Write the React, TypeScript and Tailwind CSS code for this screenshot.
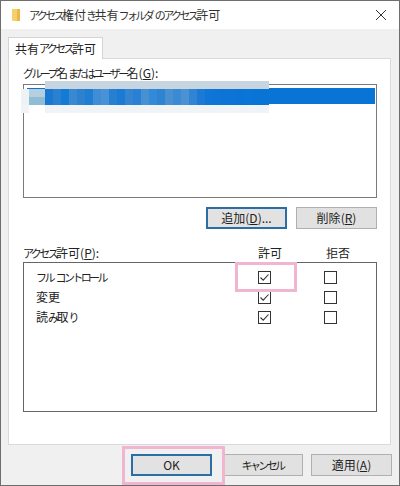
import React from 'react';

const font = { fontFamily: '"Noto Sans CJK JP", "Noto Sans", sans-serif' };

function T({ s }: { s: string }) {
  const parts = s.split(/([\u3040-\u30ff]+)/);
  return (
    <>
      {parts.map((p, i) =>
        i % 2 === 1 ? (
          <span key={i} className="text-[11px] tracking-[-2.6px]">{p}</span>
        ) : (
          <span key={i}>{p}</span>
        )
      )}
    </>
  );
}

function Check({ on }: { on?: boolean }) {
  return (
    <span className="flex h-[13px] w-[13px] items-center justify-center border border-[#333333] bg-white">
      {on && (
        <svg width="11" height="11" viewBox="0 0 11 11" fill="none">
          <path d="M1.5 5.5 L4.2 8.2 L9.5 2.5" stroke="#333333" strokeWidth="1.1" />
        </svg>
      )}
    </span>
  );
}

function Btn({ children, focus, cls }: { children: React.ReactNode; focus?: boolean; cls: string }) {
  return (
    <div
      className={`flex h-[22px] items-center justify-center whitespace-pre text-[12px] text-[#222222] ${cls} ${
        focus ? 'border-2 border-[#2a6ea6] bg-[#e2e2e2]' : 'border border-[#b0b0b0] bg-[#e1e1e1]'
      }`}
    >
      {children}
    </div>
  );
}

const blues = ['#1a78d2','#2b80d0','#127bd6','#3a88d0','#2d82d0','#1f7dd2','#3f8dd4','#4a92d6','#277fd2','#1a7ad4','#3484d0','#2a80d4','#4790d2','#338ad6','#2c84d2','#4a90d0','#3a8ad4','#4c92d2','#2f84d4','#1c7ad6','#0f76d6','#0e75d6','#0c74d6','#0b74d6','#0a74d6','#0a75d8','#0a74d6','#0a74d6'];

function Row({ label }: { label: string }) {
  return (
    <div className="flex h-5 items-center">
      <span className="w-[234px] pl-[12px] text-[12px] text-[#222222]"><T s={label} /></span>
      <Check on />
      <span className="w-[53px]" />
      <Check />
    </div>
  );
}

export default function App() {
  return (
    <div className="relative flex h-[486px] w-[400px] flex-col overflow-hidden border border-[#6e6e6e] bg-[#f0f0f0]" style={font}>
      <div className="flex h-[28px] shrink-0 items-center bg-white pl-[11px] pr-[11px]">
        <svg width="9" height="12" viewBox="0 0 9 12" className="mr-[8px]">
          <path d="M0 0 H8 V12 H1 L0 11 Z" fill="#f5cf6a" />
          <path d="M5 0 H8 V12 H5 Z" fill="#e8b84a" />
        </svg>
        <span className="flex-1 whitespace-pre text-[12px] text-[#333333]"><T s="アクセス権付き共有フォルダ のアクセス許可" /></span>
        <svg width="12" height="12" viewBox="0 0 12 12" className="mr-[1px]">
          <path d="M1 1 L11 11 M11 1 L1 11" stroke="#333333" strokeWidth="1" />
        </svg>
      </div>

      <div className="flex flex-1 flex-col px-[7px] pt-[8px]">
        <div className="relative z-10 -mb-px flex h-[22px] w-[95px] items-center justify-center whitespace-nowrap border border-b-0 border-[#d4d4d4] bg-white text-[12px] text-[#222222]">
          <T s="共有アクセス許可" />
        </div>
        <div className="h-[387px] w-[383px] border border-[#d9d9d9] bg-white px-[14px] pt-[6px]">
          <div className="h-[16px] whitespace-nowrap text-[12px] leading-[16px] text-[#222222]">
            <T s="グループ名またはユーザー名" />(<span className="underline">G</span>):
          </div>
          <div className="mt-[3px] h-[114px] w-[354px] border border-[#7a7a7a] bg-white p-[3px] pr-px">
            <div className="h-4 bg-[#0a74d6]" />
          </div>
          <div className="mt-[9px] flex w-[354px] justify-end gap-[9px]">
            <Btn focus cls="w-[81px]"><T s="追加" />(<span className="underline">D</span>)...</Btn>
            <Btn cls="w-[81px]"><T s="削除" />(<span className="underline">R</span>)</Btn>
          </div>
          <div className="mt-[15px] flex h-[18px] w-[354px] items-center whitespace-nowrap text-[12px] text-[#222222]">
            <span className="w-[235px]"><T s="アクセス許可" />(<span className="underline">P</span>):</span>
            <span className="w-[68px]">許可</span>
            <span>拒否</span>
          </div>
          <div className="h-[150px] w-[354px] border border-[#666666] bg-white pt-[4px]">
            <Row label="フル コントロール" />
            <Row label="変更" />
            <Row label="読み取り" />
          </div>
        </div>
        <div className="mt-[9px] flex justify-end gap-2">
          <Btn focus cls="mr-[2px] w-[81px]">OK</Btn>
          <Btn cls="w-[81px]"><T s="キャンセル" /></Btn>
          <Btn cls="w-[81px]"><T s="適用" />(<span className="underline">A</span>)</Btn>
        </div>
      </div>

      {/* pixelated redaction */}
      <div className="absolute left-[20px] top-[80px] h-[32px] w-[248px]">
        <div className="absolute left-[24px] top-0 h-2 w-[224px] bg-[#c7d5e0]" />
        <div className="absolute left-0 top-[8px] h-4 w-2 bg-[#eef2f5]" />
        <div className="absolute left-2 top-[8px] h-2 w-4 bg-[#b5cfdf]" />
        <div className="absolute left-2 top-4 h-2 w-4 bg-[#8fbdd6]" />
        <div className="absolute left-0 top-6 h-2 w-2 bg-[#f1f4f6]" />
        <div className="absolute left-[24px] top-6 h-2 w-[224px] bg-[#f0f4f7]" />
        <div className="absolute left-[24px] top-[8px] flex h-4 w-[224px]">
          {blues.map((c, i) => (
            <span key={i} className="h-4 w-2" style={{ backgroundColor: c }} />
          ))}
        </div>
      </div>

      {/* highlights */}
      <div className="absolute left-[234px] top-[261px] h-[30px] w-[62px] border-[3px] border-[#f0b6d0]" />
      <div className="absolute left-[121px] top-[445px] h-[39px] w-[103px] border-[3px] border-[#f0b6d0]" />
    </div>
  );
}
